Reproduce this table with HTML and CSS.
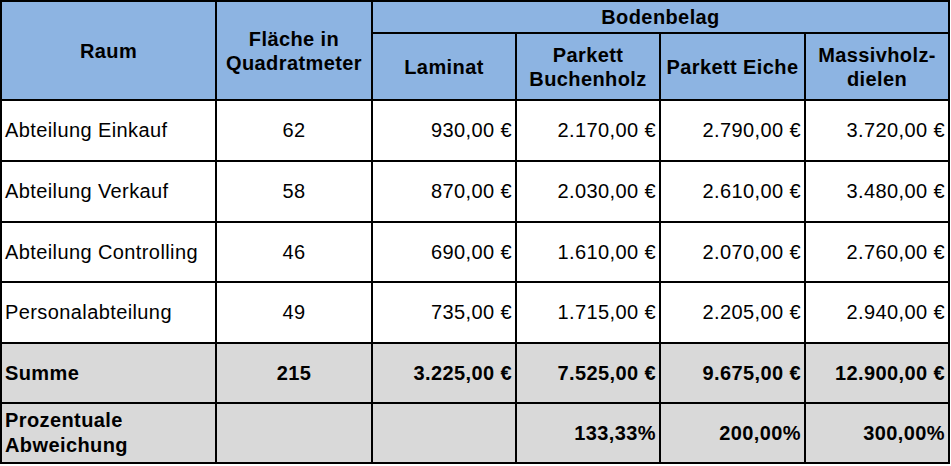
FILE: index.html
```html
<!DOCTYPE html>
<html lang="de">
<head>
<meta charset="utf-8">
<title>Bodenbelag</title>
<link rel="stylesheet" href="styles.css">
</head>
<body>
<table class="sheet">
  <colgroup>
    <col class="c-raum">
    <col class="c-flaeche">
    <col class="c-lam">
    <col class="c-buche">
    <col class="c-eiche">
    <col class="c-massiv">
  </colgroup>
  <thead>
    <tr class="h1">
      <th rowspan="2">Raum</th>
      <th rowspan="2">Fläche in<br>Quadratmeter</th>
      <th colspan="4">Bodenbelag</th>
    </tr>
    <tr class="h2">
      <th>Laminat</th>
      <th>Parkett<br>Buchenholz</th>
      <th>Parkett Eiche</th>
      <th>Massivholz-<br>dielen</th>
    </tr>
  </thead>
  <tbody>
    <tr class="r61">
      <td class="name">Abteilung Einkauf</td>
      <td class="num-c">62</td>
      <td class="num">930,00 €</td>
      <td class="num">2.170,00 €</td>
      <td class="num">2.790,00 €</td>
      <td class="num">3.720,00 €</td>
    </tr>
    <tr class="r61">
      <td class="name">Abteilung Verkauf</td>
      <td class="num-c">58</td>
      <td class="num">870,00 €</td>
      <td class="num">2.030,00 €</td>
      <td class="num">2.610,00 €</td>
      <td class="num">3.480,00 €</td>
    </tr>
    <tr class="r60">
      <td class="name">Abteilung Controlling</td>
      <td class="num-c">46</td>
      <td class="num">690,00 €</td>
      <td class="num">1.610,00 €</td>
      <td class="num">2.070,00 €</td>
      <td class="num">2.760,00 €</td>
    </tr>
    <tr class="r61">
      <td class="name">Personalabteilung</td>
      <td class="num-c">49</td>
      <td class="num">735,00 €</td>
      <td class="num">1.715,00 €</td>
      <td class="num">2.205,00 €</td>
      <td class="num">2.940,00 €</td>
    </tr>
    <tr class="sum r60">
      <td class="name">Summe</td>
      <td class="num-c">215</td>
      <td class="num">3.225,00 €</td>
      <td class="num">7.525,00 €</td>
      <td class="num">9.675,00 €</td>
      <td class="num">12.900,00 €</td>
    </tr>
    <tr class="sum pct r60">
      <td class="name">Prozentuale<br>Abweichung</td>
      <td></td>
      <td></td>
      <td class="num">133,33%</td>
      <td class="num">200,00%</td>
      <td class="num">300,00%</td>
    </tr>
  </tbody>
</table>
</body>
</html>
```
FILE: styles.css
```css
html, body {
  margin: 0;
  padding: 0;
  background: #ffffff;
}

.sheet {
  border-collapse: collapse;
  table-layout: fixed;
  width: 950px;
  font-family: "Liberation Sans", Arial, sans-serif;
  font-size: 20px;
  letter-spacing: 0.4px;
  color: #000000;
}

.c-raum { width: 215px; }
.c-flaeche { width: 156px; }
.c-lam { width: 144px; }
.c-buche { width: 144px; }
.c-eiche { width: 145px; }
.c-massiv { width: 144px; }

.sheet th,
.sheet td {
  border: 2px solid #000000;
  padding: 0 3px;
  vertical-align: middle;
  overflow: hidden;
  white-space: nowrap;
}

.sheet th {
  background: #8db4e2;
  font-weight: bold;
  text-align: center;
  line-height: 24px;
}

.h1 { height: 32px; }
.h2 { height: 67px; }
.r61 { height: 61px; }
.r60 { height: 60px; }

.name { text-align: left; }
.num { text-align: right; }
.num-c { text-align: center; }

.sum td {
  background: #d9d9d9;
  font-weight: bold;
}

.pct .name {
  line-height: 25px;
}
```
